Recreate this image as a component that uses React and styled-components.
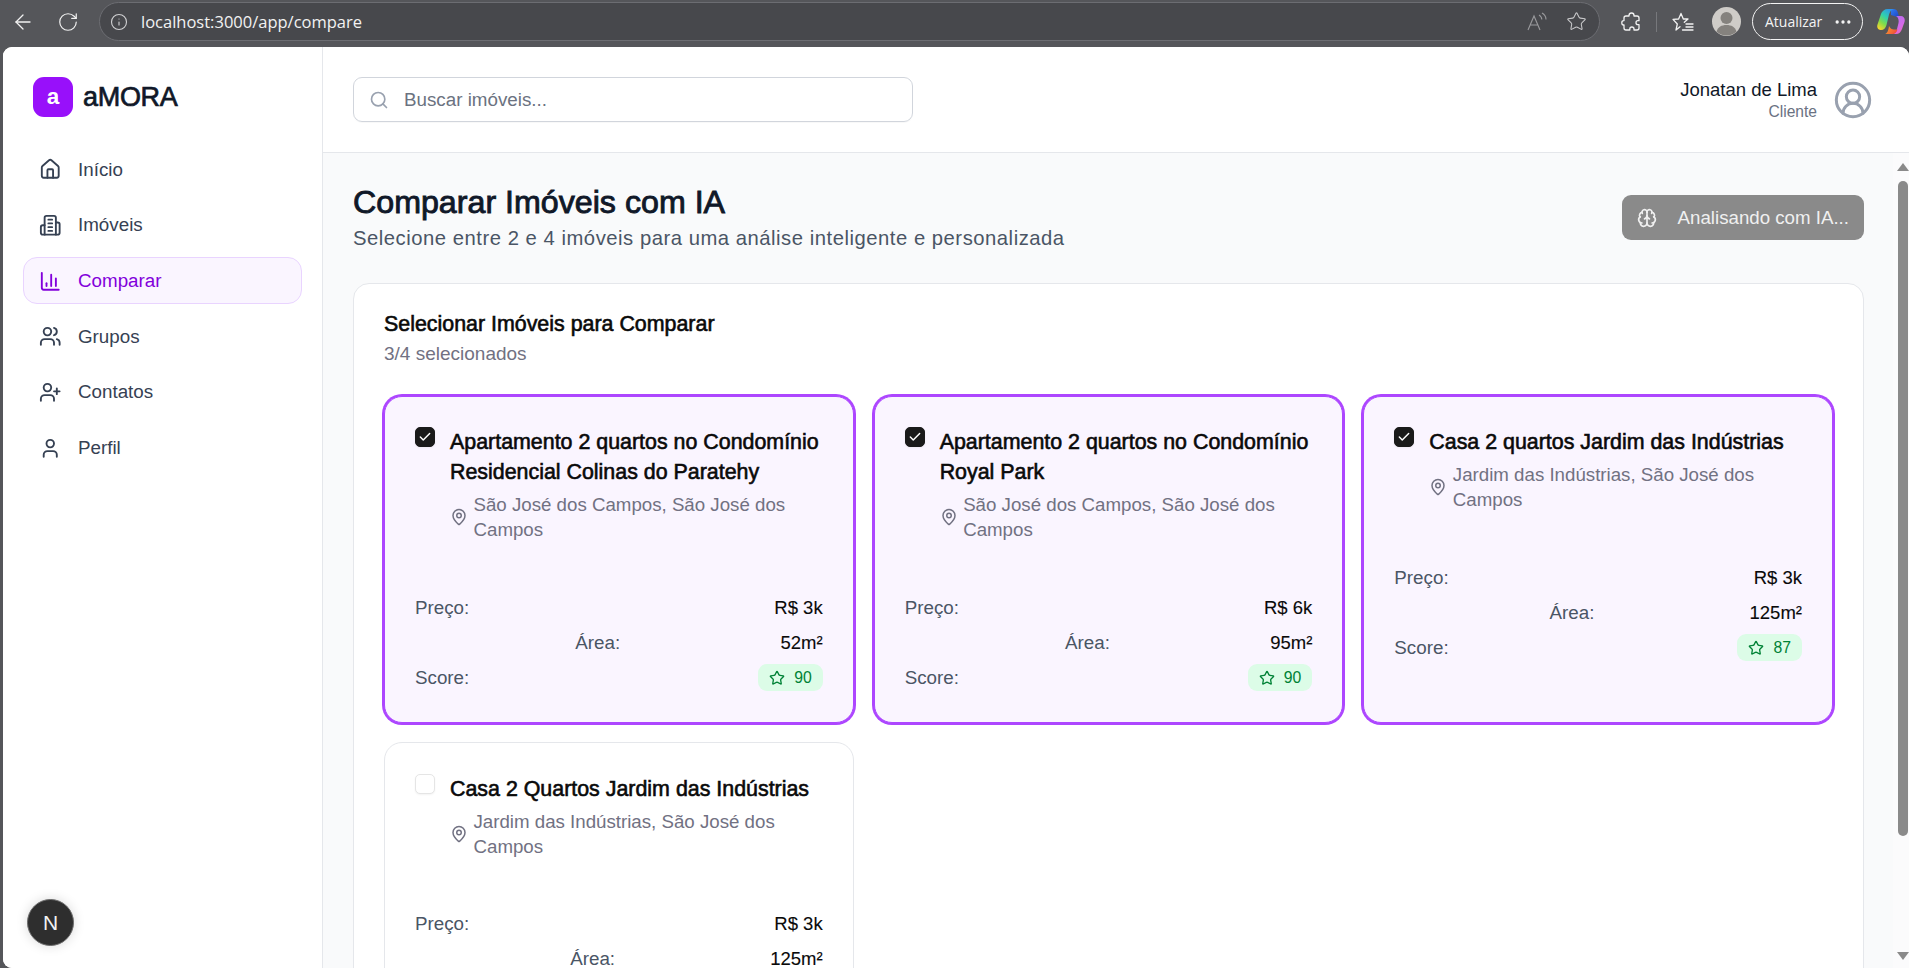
import React from 'react';
import styled, { createGlobalStyle } from 'styled-components';
import {
    ArrowLeft,
    Brain,
    Check,
    ChartColumn,
    CircleUserRound,
    Ellipsis,
    House,
    Info,
    MapPin,
    RotateCw,
    Search,
    Star,
    User,
    UserPlus,
    Users,
} from 'lucide-react';

const BuildingIcon = ({ size = 24 }) => (
    <svg width={size} height={size} viewBox="0 0 24 24" fill="none" stroke="currentColor" strokeWidth="2" strokeLinecap="round" strokeLinejoin="round">
        <path d="M6 22V4a2 2 0 0 1 2-2h8a2 2 0 0 1 2 2v18Z" />
        <path d="M6 12H4a2 2 0 0 0-2 2v6a2 2 0 0 0 2 2h2" />
        <path d="M18 9h2a2 2 0 0 1 2 2v9a2 2 0 0 1-2 2h-2" />
        <path d="M10 6h4M10 10h4M10 14h4M10 18h4" />
    </svg>
);

const ReadAloudIcon = () => (
    <svg width="20" height="20" viewBox="0 0 20 20" fill="none" stroke="currentColor" strokeWidth="1.1">
        <path d="M1 18 7 4l6 14M3.2 13h7.6" />
        <path d="M12 3c1.8 1 2.8 2.6 2.8 4.6M15 1c2.6 1.4 4 3.8 4 6.6" />
    </svg>
);

const PuzzleIcon = () => (
    <svg width="20" height="20" viewBox="0 0 20 20" fill="none" stroke="currentColor" strokeWidth="1.3" strokeLinejoin="round">
        <path d="M8 3.5c0-1.6 1.2-2.5 2.6-2.5s2.4 1 2.4 2.5V4h3a2 2 0 0 1 2 2v2.7h-1c-1.3 0-2 .9-2 2s.7 2 2 2h1V16a2 2 0 0 1-2 2h-3v-1c0-1.3-1-2-2.1-2S8.800 15.700 8.800 17v1H5a2 2 0 0 1-2-2v-3H2.500C1.100 13 .8 11.800.8 10.800S1.400 8.600 2.500 8.600H3V6a2 2 0 0 1 2-2h3z" />
    </svg>
);

const FavoritesIcon = () => (
    <svg width="22" height="20" viewBox="0 0 22 20" fill="none" stroke="currentColor" strokeWidth="1.300" strokeLinejoin="round" strokeLinecap="round">
        <path d="M9 1.500 11.300 7H16l-3.700 3.300M8 14.700 4 18l1.300-6L1 7.400 6.600 7 9 1.500" />
        <path d="M14 12h7M14 15h7M10.500 18h10.500" />
    </svg>
);

const ProfileAvatar = () => (
    <svg width="29" height="29" viewBox="0 0 29 29">
        <circle cx="14.500" cy="14.500" r="14.500" fill="#cfccc8" />
        <circle cx="14.500" cy="11" r="6" fill="#85827e" />
        <path d="M4.500 24.500c1.500-4.500 5-6.500 10-6.500s8.500 2 10 6.500a14.500 14.500 0 0 1-20 0z" fill="#85827e" />
    </svg>
);

const CopilotLogo = () => (
    <svg width="28" height="27" viewBox="0 0 28 27">
        <defs>
            <linearGradient id="copilotLeft" x1="0.8" y1="0" x2="0.2" y2="1">
                <stop offset="0" stopColor="#2f8fee" />
                <stop offset="0.4" stopColor="#2fd0b0" />
                <stop offset="0.7" stopColor="#7fdc4a" />
                <stop offset="1" stopColor="#f7d52e" />
            </linearGradient>
            <linearGradient id="copilotTop" x1="0" y1="0" x2="1" y2="1">
                <stop offset="0" stopColor="#2f7cf0" />
                <stop offset="1" stopColor="#1c3fc0" />
            </linearGradient>
            <linearGradient id="copilotRight" x1="0.2" y1="0" x2="0.8" y2="1">
                <stop offset="0" stopColor="#b56cf0" />
                <stop offset="0.6" stopColor="#d46ae8" />
                <stop offset="1" stopColor="#f06ab0" />
            </linearGradient>
            <linearGradient id="copilotBottom" x1="0" y1="0.3" x2="1" y2="0.7">
                <stop offset="0" stopColor="#f7a02e" />
                <stop offset="1" stopColor="#f0483c" />
            </linearGradient>
        </defs>
        <path d="M14 1h2c3 0 4.500 1.500 5 4l1.500 5-5.500-2-3-1z" fill="url(#copilotTop)" />
        <path d="M11 1h6c-3 .5-4 2.500-5 5.500L9.500 17C8.700 20 6.800 22 4 22c-3 0-4.500-2.500-3.500-5.500L4 6c1-3 3.500-5 7-5z" fill="url(#copilotLeft)" />
        <path d="M19 8h5c2.500 0 4.500 2.500 3.500 6L25 21c-1 3-3 5-6 5h-3c2.500-1 3.500-3 4-5l1.500-6c.6-3-.5-6-2.500-7z" fill="url(#copilotRight)" />
        <path d="M12 18c1 2.500 3 3.500 5 3.500h3.500C20 24 18 26 15.500 26H8c2-.5 3.400-3 4-8z" fill="url(#copilotBottom)" />
    </svg>
);

const properties = [
    {
        id: 1,
        title: 'Apartamento 2 quartos no Condomínio Residencial Colinas do Paratehy',
        location: 'São José dos Campos, São José dos Campos',
        price: 'R$ 3k',
        area: '52m²',
        score: 90,
        selected: true,
    },
    {
        id: 2,
        title: 'Apartamento 2 quartos no Condomínio Royal Park',
        location: 'São José dos Campos, São José dos Campos',
        price: 'R$ 6k',
        area: '95m²',
        score: 90,
        selected: true,
    },
    {
        id: 3,
        title: 'Casa 2 quartos Jardim das Indústrias',
        location: 'Jardim das Indústrias, São José dos Campos',
        price: 'R$ 3k',
        area: '125m²',
        score: 87,
        selected: true,
    },
    {
        id: 4,
        title: 'Casa 2 Quartos Jardim das Indústrias',
        location: 'Jardim das Indústrias, São José dos Campos',
        price: 'R$ 3k',
        area: '125m²',
        score: 87,
        selected: false,
    },
];

const navItems = [
    { label: 'Início', icon: <House size={22.5} /> },
    { label: 'Imóveis', icon: <BuildingIcon size={22.5} /> },
    { label: 'Comparar', icon: <ChartColumn size={22.5} />, active: true },
    { label: 'Grupos', icon: <Users size={22.5} /> },
    { label: 'Contatos', icon: <UserPlus size={22.5} /> },
    { label: 'Perfil', icon: <User size={22.5} /> },
];

export default function App() {
    return (
        <>
            <GlobalStyle />
            <Window>
                <BrowserBar>
                    <BrowserButton><ArrowLeft size={24} strokeWidth={1.300} /></BrowserButton>
                    <BrowserButton><RotateCw size={22} strokeWidth={1.300} /></BrowserButton>
                    <AddressBar>
                        <Info size={18} strokeWidth={1.500} />
                        <AddressText>localhost:3000/app/compare</AddressText>
                        <AddressActions>
                            <ReadAloudIcon />
                            <AddressStar><Star size={21} strokeWidth={1.200} /></AddressStar>
                        </AddressActions>
                    </AddressBar>
                    <ToolIcons>
                        <PuzzleIcon />
                        <ToolDivider />
                        <FavoritesIcon />
                        <AvatarSlot><ProfileAvatar /></AvatarSlot>
                    </ToolIcons>
                    <UpdatePill>
                        Atualizar
                        <Ellipsis size={20} />
                    </UpdatePill>
                    <CopilotLogo />
                </BrowserBar>
                <AppFrame>
                    <Sidebar>
                        <Brand>
                            <BrandMark>a</BrandMark>
                            <BrandName>aMORA</BrandName>
                        </Brand>
                        <Nav>
                            {navItems.map((item) => (
                                <NavItem key={item.label} $active={item.active}>
                                    {item.icon}
                                    {item.label}
                                </NavItem>
                            ))}
                        </Nav>
                        <DevBadge>N</DevBadge>
                    </Sidebar>
                    <Content>
                        <TopBar>
                            <SearchBox>
                                <Search size={20} />
                                <SearchInput placeholder="Buscar imóveis..." readOnly />
                            </SearchBox>
                            <UserArea>
                                <UserText>
                                    <UserName>Jonatan de Lima</UserName>
                                    <UserRole>Cliente</UserRole>
                                </UserText>
                                <UserIcon><CircleUserRound size={40} strokeWidth={1.800} /></UserIcon>
                            </UserArea>
                        </TopBar>
                        <MainRow>
                            <Main>
                                <PageHead>
                                    <div>
                                        <PageTitle>Comparar Imóveis com IA</PageTitle>
                                        <PageSubtitle>Selecione entre 2 e 4 imóveis para uma análise inteligente e personalizada</PageSubtitle>
                                    </div>
                                    <AnalyzeButton>
                                        <Brain size={20} />
                                        Analisando com IA...
                                    </AnalyzeButton>
                                </PageHead>
                                <Panel>
                                    <PanelTitle>Selecionar Imóveis para Comparar</PanelTitle>
                                    <PanelCount>3/4 selecionados</PanelCount>
                                    <CardGrid>
                                        {properties.map((property) => (
                                            <PropertyCard key={property.id} $selected={property.selected}>
                                                <CardHead>
                                                    <CheckBox $checked={property.selected}>
                                                        {property.selected && <Check size={14} strokeWidth={2.500} />}
                                                    </CheckBox>
                                                    <CardInfo>
                                                        <CardTitle>{property.title}</CardTitle>
                                                        <CardLocation>
                                                            <MapPin size={18} />
                                                            <span>{property.location}</span>
                                                        </CardLocation>
                                                    </CardInfo>
                                                </CardHead>
                                                <Stats>
                                                    <StatRow>
                                                        <StatLabel>Preço:</StatLabel>
                                                        <StatValue>{property.price}</StatValue>
                                                    </StatRow>
                                                    <StatRow>
                                                        <span />
                                                        <StatLabel>Área:</StatLabel>
                                                        <StatValue>{property.area}</StatValue>
                                                    </StatRow>
                                                    <StatRow>
                                                        <StatLabel>Score:</StatLabel>
                                                        <ScoreBadge>
                                                            <Star size={16} />
                                                            {property.score}
                                                        </ScoreBadge>
                                                    </StatRow>
                                                </Stats>
                                            </PropertyCard>
                                        ))}
                                    </CardGrid>
                                </Panel>
                            </Main>
                            <ScrollTrack>
                                <ScrollArrow />
                                <ScrollThumb />
                                <ScrollArrow $down />
                            </ScrollTrack>
                        </MainRow>
                    </Content>
                </AppFrame>
            </Window>
        </>
    );
}

const GlobalStyle = createGlobalStyle`
    * {
        box-sizing: border-box;
    }
    html, body {
        margin: 0;
        height: 100%;
        overflow: hidden;
        font-family: "Liberation Sans", Arial, sans-serif;
    }
`;

const Window = styled.div`
    display: flex;
    flex-direction: column;
    height: 100vh;
    background: #55565a;
`;

const BrowserBar = styled.div`
    display: flex;
    align-items: center;
    flex: 0 0 47px;
    height: 47px;
    padding: 0 4px 4px 11px;
    color: #f2f2f2;
`;

const BrowserButton = styled.div`
    display: flex;
    align-items: center;
    justify-content: center;
    width: 24px;
    margin-right: 21px;
`;

const AddressBar = styled.div`
    display: flex;
    align-items: center;
    flex: 1;
    height: 39px;
    margin-left: -2px;
    padding: 0 12px 0 10px;
    border: 1.500px solid #6c6d72;
    border-radius: 20px;
    background: #47484c;
    color: #d0d0d2;
`;

const AddressText = styled.span`
    margin-left: 13px;
    font-family: "Open Sans", sans-serif;
    font-size: 16.500px;
    color: #f2f2f2;
`;

const AddressActions = styled.div`
    display: flex;
    align-items: center;
    gap: 19px;
    margin-left: auto;
    color: #9a9a9d;
`;

const AddressStar = styled.span`
    display: flex;
    color: #c8c8ca;
`;

const ToolIcons = styled.div`
    display: flex;
    align-items: center;
    gap: 15px;
    margin: 0 11px 0 21px;
`;

const AvatarSlot = styled.span`
    display: flex;
    margin-left: 3px;
`;

const ToolDivider = styled.div`
    width: 1px;
    height: 20px;
    background: #77787c;
`;

const UpdatePill = styled.div`
    display: flex;
    align-items: center;
    justify-content: space-between;
    width: 111px;
    height: 37px;
    margin-right: 14px;
    padding: 0 9px 0 12px;
    border: 1.500px solid #f4f4f4;
    border-radius: 19px;
    font-family: "Open Sans", sans-serif;
    font-size: 14px;
    color: #f4f4f4;
`;

const AppFrame = styled.div`
    display: flex;
    flex: 1;
    min-height: 0;
    margin-left: 3px;
    border-radius: 9px 9px 0 9px;
    overflow: hidden;
    background: #fff;
`;

const Sidebar = styled.aside`
    position: relative;
    flex: 0 0 320px;
    padding: 29px 20px 0;
    border-right: 1px solid #e5e7eb;
    background: #fff;
`;

const Brand = styled.div`
    display: flex;
    align-items: center;
    gap: 10px;
    margin: 1px 0 29px 10px;
`;

const BrandMark = styled.div`
    display: flex;
    align-items: center;
    justify-content: center;
    width: 40px;
    height: 40px;
    border-radius: 11px;
    background: #9810fa;
    color: #fff;
    font-size: 22.500px;
    font-weight: 700;
`;

const BrandName = styled.div`
    font-size: 27px;
    font-weight: 400;
    letter-spacing: -0.300px;
    -webkit-text-stroke: 0.700px #101828;
    color: #101828;
`;

const Nav = styled.nav`
    display: flex;
    flex-direction: column;
    gap: 8.700px;
`;

const NavItem = styled.a`
    display: flex;
    align-items: center;
    gap: 16.500px;
    height: 47px;
    padding: 0 15px;
    border: 1px solid ${(props) => (props.$active ? '#e9d4ff' : 'transparent')};
    border-radius: 14px;
    background: ${(props) => (props.$active ? '#faf5ff' : 'transparent')};
    font-size: 18.800px;
    color: ${(props) => (props.$active ? '#8200db' : '#364153')};
`;

const DevBadge = styled.div`
    position: absolute;
    left: 24px;
    bottom: 22px;
    display: flex;
    align-items: center;
    justify-content: center;
    width: 47px;
    height: 47px;
    border-radius: 50%;
    border: 1px solid #6a6a6a;
    background: #2e2e2e;
    box-shadow: 0 0 12px rgba(0, 0, 0, 0.15);
    font-size: 21px;
    color: #f2f2f2;
`;

const Content = styled.div`
    display: flex;
    flex: 1;
    flex-direction: column;
    min-width: 0;
`;

const TopBar = styled.header`
    display: flex;
    align-items: center;
    justify-content: space-between;
    flex: 0 0 106px;
    padding: 0 36px 0 30px;
    border-bottom: 1px solid #e5e7eb;
    background: #fff;
`;

const SearchBox = styled.div`
    display: flex;
    align-items: center;
    gap: 15px;
    width: 560px;
    height: 45px;
    padding: 0 15px;
    border: 1px solid #d1d5dc;
    border-radius: 9px;
    box-shadow: 0 1px 1px rgba(0, 0, 0, 0.03);
    color: #99a1af;
`;

const SearchInput = styled.input`
    flex: 1;
    padding: 0;
    border: 0;
    outline: 0;
    background: transparent;
    font-family: inherit;
    font-size: 18.800px;
    &::placeholder {
        color: #6b7280;
    }
`;

const UserArea = styled.div`
    display: flex;
    align-items: center;
    gap: 16px;
`;

const UserText = styled.div`
    display: flex;
    flex-direction: column;
    align-items: flex-end;
`;

const UserName = styled.div`
    font-size: 18.500px;
    line-height: 24px;
    color: #101828;
`;

const UserRole = styled.div`
    font-size: 15.600px;
    line-height: 20px;
    color: #6a7282;
`;

const UserIcon = styled.div`
    display: flex;
    color: #99a1af;
`;

const MainRow = styled.div`
    display: flex;
    flex: 1;
    min-height: 0;
`;

const Main = styled.main`
    flex: 1;
    min-width: 0;
    padding: 30px 29px 30px 30px;
    overflow: hidden;
    background: #f9fafb;
`;

const ScrollTrack = styled.div`
    display: flex;
    flex-direction: column;
    align-items: flex-start;
    flex: 0 0 16px;
    padding: 10px 0 8px 4px;
    background: #fbfbfc;
`;

const ScrollArrow = styled.div`
    flex: none;
    width: 0;
    height: 0;
    margin-top: ${(props) => (props.$down ? 'auto' : '0')};
    border-left: 6px solid transparent;
    border-right: 6px solid transparent;
    border-${(props) => (props.$down ? 'top' : 'bottom')}: 8px solid #8a8a8a;
`;

const ScrollThumb = styled.div`
    flex: none;
    width: 10px;
    height: 655px;
    margin: 10px 0 0 1px;
    border-radius: 5px;
    background: #8a8a8a;
`;

const PageHead = styled.div`
    display: flex;
    align-items: flex-start;
    justify-content: space-between;
    margin-bottom: 32px;
`;

const PageTitle = styled.h1`
    margin: 0;
    font-size: 32.200px;
    line-height: 38px;
    font-weight: 400;
    -webkit-text-stroke: 0.900px #101828;
    color: #101828;
`;

const PageSubtitle = styled.p`
    margin: 4px 0 0;
    font-size: 20.250px;
    line-height: 26px;
    letter-spacing: 0.520px;
    color: #4a5565;
`;

const AnalyzeButton = styled.button`
    display: flex;
    align-items: center;
    gap: 21px;
    height: 45px;
    margin-top: 12px;
    padding: 0 15px 0 14.500px;
    border: 0;
    border-radius: 9px;
    background: #8a8a8a;
    font-family: inherit;
    font-size: 18.700px;
    color: #f0f0f0;
`;

const Panel = styled.section`
    padding: 28px 30px 31px;
    border: 1px solid #e5e7eb;
    border-radius: 16px;
    background: #fff;
`;

const PanelTitle = styled.h2`
    margin: 0;
    font-size: 21.400px;
    line-height: 24px;
    font-weight: 400;
    -webkit-text-stroke: 0.600px #0a0a0a;
    color: #0a0a0a;
`;

const PanelCount = styled.div`
    margin-top: 5px;
    font-size: 19px;
    line-height: 26px;
    color: #717182;
`;

const CardGrid = styled.div`
    display: grid;
    grid-template-columns: repeat(3, 1fr);
    gap: 19px 20px;
    margin-top: 28.500px;
`;

const PropertyCard = styled.article`
    padding: 30.500px 30px 31px;
    border: 1px solid ${(props) => (props.$selected ? '#ad46ff' : '#e5e7eb')};
    border-radius: 18px;
    background: ${(props) => (props.$selected ? '#faf5ff' : '#fff')};
    box-shadow: ${(props) => (props.$selected ? '0 0 0 2px #ad46ff' : 'none')};
`;

const CardHead = styled.div`
    display: flex;
    gap: 15px;
`;

const CheckBox = styled.div`
    display: flex;
    align-items: center;
    justify-content: center;
    flex: 0 0 20px;
    height: 20px;
    border: 1px solid ${(props) => (props.$checked ? '#1a1a1a' : '#e5e5e5')};
    border-radius: 5px;
    background: ${(props) => (props.$checked ? '#1a1a1a' : '#fff')};
    box-shadow: 0 1px 2px rgba(0, 0, 0, 0.05);
    color: #fff;
`;

const CardInfo = styled.div`
    flex: 1;
    min-width: 0;
`;

const CardTitle = styled.h3`
    margin: 0;
    font-size: 21.400px;
    line-height: 30px;
    font-weight: 400;
    -webkit-text-stroke: 0.600px #0a0a0a;
    color: #0a0a0a;
`;

const CardLocation = styled.div`
    display: flex;
    align-items: center;
    gap: 5.500px;
    margin-top: 5px;
    font-size: 18.700px;
    line-height: 25px;
    color: #717182;

    svg {
        flex: none;
    }
`;

const Stats = styled.div`
    display: flex;
    flex-direction: column;
    gap: 8px;
    margin-top: 52px;
`;

const StatRow = styled.div`
    display: flex;
    align-items: center;
    justify-content: space-between;
    min-height: 27px;
`;

const StatLabel = styled.span`
    font-size: 18.800px;
    color: #4a5565;
`;

const StatValue = styled.span`
    font-size: 18.500px;
    -webkit-text-stroke: 0.100px #0a0a0a;
    color: #0a0a0a;
`;

const ScoreBadge = styled.div`
    display: flex;
    align-items: center;
    gap: 9px;
    height: 27px;
    padding: 0 11px;
    border-radius: 9px;
    background: #dcfce7;
    font-size: 15.750px;
    color: #008236;
`;
